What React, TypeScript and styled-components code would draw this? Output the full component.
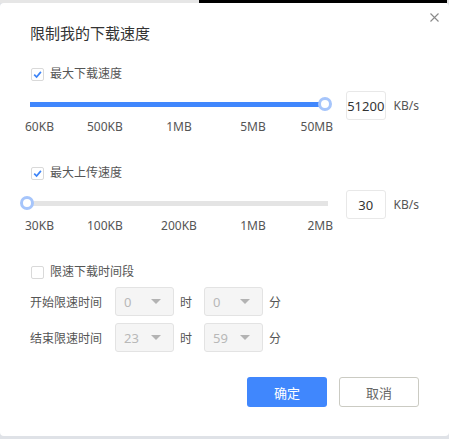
import React from "react";
import styled, { createGlobalStyle } from "styled-components";

const Global = createGlobalStyle`
  html, body { margin: 0; padding: 0; background: #dfe2e7; }
  body { font-family: "Noto Sans", "Noto Sans CJK SC", sans-serif; }
`;

const Page = styled.div`
  width: 449px;
  height: 439px;
  display: flex;
  flex-direction: column;
  overflow: hidden;
`;

const TopStrip = styled.div`
  height: 3px;
  display: flex;
  flex-shrink: 0;
`;

const StripPart = styled.div<{ $w?: number; $c: string }>`
  ${(p) => (p.$w ? `width: ${p.$w}px;` : "flex: 1;")}
  background: ${(p) => p.$c};
`;

const Dialog = styled.div`
  position: relative;
  height: 433px;
  flex-shrink: 0;
  background: #fff;
  border-radius: 4px;
  padding: 0 30px;
  box-sizing: border-box;
  display: flex;
  flex-direction: column;
`;

const Close = styled.button`
  position: absolute;
  top: 10px;
  right: 10px;
  width: 9px;
  height: 9px;
  padding: 0;
  border: none;
  background: none;
  display: flex;
`;

const Title = styled.div`
  padding-top: 20px;
  font-size: 15px;
  line-height: 20px;
  color: #333;
`;

const CheckRow = styled.label<{ $mt: number }>`
  display: flex;
  align-items: center;
  height: 16px;
  margin-top: ${(p) => p.$mt}px;
  padding-left: 1px;
`;

const Box = styled.span`
  width: 13px;
  height: 13px;
  box-sizing: border-box;
  border: 1px solid #d9d9d9;
  border-radius: 2px;
  background: #fff;
  display: flex;
  align-items: center;
  justify-content: center;
  margin-right: 6px;
`;

const Text = styled.span`
  font-size: 12px;
  line-height: 16px;
  color: #555;
  white-space: nowrap;
`;

const SliderRow = styled.div`
  display: flex;
  align-items: flex-start;
  margin-top: 9px;
`;

const SliderArea = styled.div`
  width: 308px;
  margin-left: -5px;
  padding-top: 6px;
`;

const TrackWrap = styled.div`
  position: relative;
  height: 14px;
  display: flex;
  align-items: center;
`;

const Bar = styled.div`
  margin-left: 5px;
  width: 298px;
  height: 5px;
  background: #e4e4e4;
  display: flex;
`;

const Fill = styled.div`
  height: 100%;
  background: #4087fd;
`;

const Thumb = styled.div`
  position: absolute;
  top: 0;
  width: 14px;
  height: 14px;
  box-sizing: border-box;
  border-radius: 50%;
  border: 3px solid #a6c5fb;
  background: #fff;
`;

const Ticks = styled.div`
  display: grid;
  grid-template-columns: 62px 61px 62px 86px 37px;
  margin-top: 8px;
  font-size: 12px;
  line-height: 16px;
  color: #555;
`;

const Tick = styled.span<{ $align: string }>`
  justify-self: ${(p) => p.$align};
  white-space: nowrap;
`;

const NumBox = styled.div`
  width: 41px;
  height: 29px;
  box-sizing: border-box;
  margin-left: 13px;
  border: 1px solid #e8e8e8;
  border-radius: 3px;
  display: flex;
  align-items: center;
  justify-content: center;
  font-size: 13px;
  color: #333;
`;

const Unit = styled.span`
  margin-left: 8px;
  font-size: 12px;
  line-height: 29px;
  color: #555;
`;

const TimeRow = styled.div`
  display: flex;
  align-items: center;
  margin-top: 7px;
`;

const TimeLabel = styled.span`
  width: 85px;
  font-size: 12px;
  color: #555;
  white-space: nowrap;
`;

const Select = styled.div`
  width: 59px;
  height: 29px;
  box-sizing: border-box;
  border: 1px solid #e3e3e3;
  border-radius: 3px;
  background: #f5f5f5;
  padding: 0 12px 0 8px;
  display: flex;
  align-items: center;
  justify-content: space-between;
  font-size: 13px;
  color: #b8b8b8;
`;

const Caret = styled.span`
  width: 0;
  height: 0;
  border-left: 5px solid transparent;
  border-right: 5px solid transparent;
  border-top: 5px solid #b3b3b3;
`;

const TimeUnit = styled.span<{ $mr: number }>`
  margin-left: 6px;
  margin-right: ${(p) => p.$mr}px;
  font-size: 12px;
  color: #555;
`;

const ButtonRow = styled.div`
  display: flex;
  justify-content: flex-end;
  gap: 12px;
  margin-top: 25px;
`;

const Button = styled.button<{ $primary?: boolean }>`
  width: 80px;
  height: 30px;
  box-sizing: border-box;
  border-radius: 3px;
  font-family: inherit;
  font-size: 13px;
  cursor: pointer;
  border: ${(p) => (p.$primary ? "none" : "1px solid #cbcbc3")};
  background: ${(p) => (p.$primary ? "#4087fd" : "#fff")};
  color: ${(p) => (p.$primary ? "#fff" : "#666")};
`;

const Check = () => (
  <svg width="9" height="9" viewBox="0 0 9 9">
    <path d="M1.2 4.6 L3.6 7 L7.9 1.9" fill="none" stroke="#3d84f7" strokeWidth="1.7" />
  </svg>
);

const CheckItem = ({ mt, checked, label }: { mt: number; checked: boolean; label: string }) => (
  <CheckRow $mt={mt}>
    <Box>{checked && <Check />}</Box>
    <Text>{label}</Text>
  </CheckRow>
);

const aligns = ["start", "start", "center", "center", "end"];

const Slider = ({ pct, ticks, value }: { pct: number; ticks: string[]; value: string }) => {
  const center = 2 + pct * 298;
  return (
    <SliderRow>
      <SliderArea>
        <TrackWrap>
          <Bar>
            <Fill style={{ width: Math.max(0, center - 5) }} />
          </Bar>
          <Thumb style={{ left: center - 7 }} />
        </TrackWrap>
        <Ticks>
          {ticks.map((t, i) => (
            <Tick key={t} $align={aligns[i]}>
              {t}
            </Tick>
          ))}
        </Ticks>
      </SliderArea>
      <NumBox>{value}</NumBox>
      <Unit>KB/s</Unit>
    </SliderRow>
  );
};

const TimeLine = ({ label, h, m }: { label: string; h: string; m: string }) => (
  <TimeRow>
    <TimeLabel>{label}</TimeLabel>
    <Select>
      <span>{h}</span>
      <Caret />
    </Select>
    <TimeUnit $mr={12}>时</TimeUnit>
    <Select>
      <span>{m}</span>
      <Caret />
    </Select>
    <TimeUnit $mr={0}>分</TimeUnit>
  </TimeRow>
);

export default function App() {
  return (
    <Page>
      <Global />
      <TopStrip>
        <StripPart $w={199} $c="#e6e6e6" />
        <StripPart $c="#000" />
        <StripPart $w={2} $c="#e6e6e6" />
      </TopStrip>
      <Dialog>
        <Close aria-label="close">
          <svg width="9" height="9" viewBox="0 0 9 9">
            <path d="M0.5 0.5 L8.5 8.5 M8.5 0.5 L0.5 8.5" stroke="#8a8a8a" strokeWidth="1.1" />
          </svg>
        </Close>
        <Title>限制我的下载速度</Title>
        <CheckItem mt={23} checked label="最大下载速度" />
        <Slider pct={1} ticks={["60KB", "500KB", "1MB", "5MB", "50MB"]} value="51200" />
        <CheckItem mt={30} checked label="最大上传速度" />
        <Slider pct={0} ticks={["30KB", "100KB", "200KB", "1MB", "2MB"]} value="30" />
        <CheckItem mt={30} checked={false} label="限速下载时间段" />
        <TimeLine label="开始限速时间" h="0" m="0" />
        <TimeLine label="结束限速时间" h="23" m="59" />
        <ButtonRow>
          <Button $primary>确定</Button>
          <Button>取消</Button>
        </ButtonRow>
      </Dialog>
    </Page>
  );
}
